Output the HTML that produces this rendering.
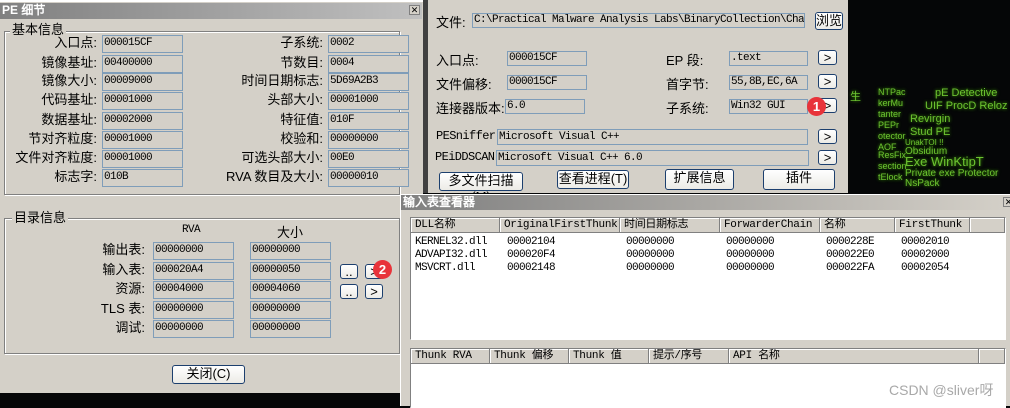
<!DOCTYPE html>
<html><head><meta charset="utf-8"><style>
*{margin:0;padding:0;box-sizing:border-box}
body{width:1010px;height:406px;overflow:hidden;background:#050607;position:relative;font-family:"Liberation Sans","Noto Sans CJK SC",sans-serif;font-size:12px;color:#000}
.a{position:absolute}
.win{background:#d4d0c8}
.tb{background:linear-gradient(90deg,#808080,#c0c0c0);color:#fff;font-weight:bold;font-size:12px;line-height:15px;padding-left:2px;font-family:"Liberation Sans","WenQuanYi Zen Hei",sans-serif}
.x{width:11px;height:10px;border:1px solid #808080;background:#d4d0c8;font-size:9px;line-height:8px;text-align:center;color:#000;font-weight:normal}
.f{border:1px solid #7f9db9;background:#d4d0c8;font-family:"Liberation Mono",monospace;font-size:11px;line-height:15px;padding-left:1px;overflow:hidden;white-space:nowrap;letter-spacing:-0.6px}
.l{text-align:right;font-size:13px;line-height:16px;white-space:nowrap}
.g{border:1px solid #808080;box-shadow:1px 1px 0 #fff inset,1px 1px 0 #fff}
.gt{background:#d4d0c8;font-size:13px;line-height:14px;padding:0 2px}
.b{border:1px solid #1c3f6e;border-radius:3px;background:linear-gradient(#fff,#ecebe6);text-align:center;font-size:13px;line-height:16px}
.lv{background:#fff;border:1px solid #808080;border-right-color:#fff;border-bottom-color:#fff}
.h{background:#d4d0c8;border-right:1px solid #808080;border-bottom:1px solid #808080;box-shadow:inset 1px 1px 0 #fff;font-family:"Liberation Mono","Noto Sans CJK SC",monospace;font-size:11px;line-height:14px;padding-left:4px;white-space:nowrap;overflow:hidden;letter-spacing:-0.3px}
.m{font-family:"Liberation Mono",monospace;font-size:11px;line-height:13px;letter-spacing:-0.6px;white-space:nowrap}
.gr{color:#6cc232;font-size:10px;white-space:nowrap;text-shadow:0 0 3px #4a0}
.bad{background:#e8333a;color:#fff;border-radius:50%;width:19px;height:19px;text-align:center;font-size:13px;line-height:19px;font-weight:bold}
</style></head><body>

<div class="a win" style="left:0;top:0;width:423px;height:393px;border-top:2px solid #fff"></div>
<div class="a tb" style="left:0;top:3px;width:422px;height:16px">PE 细节</div>
<div class="a x" style="left:409px;top:5px">✕</div>
<div class="a" style="left:423px;top:0;width:5px;height:193px;background:#404040"></div>

<div class="a g" style="left:4px;top:31px;width:396px;height:164px"></div>
<div class="a gt" style="left:10px;top:23px">基本信息</div>
<div class="a l" style="left:0;width:97px;top:35px">入口点:</div><div class="a f" style="left:102px;top:35px;width:81px;height:18px">000015CF</div>
<div class="a l" style="left:0;width:97px;top:55px">镜像基址:</div><div class="a f" style="left:102px;top:55px;width:81px;height:18px">00400000</div>
<div class="a l" style="left:0;width:97px;top:73px">镜像大小:</div><div class="a f" style="left:102px;top:73px;width:81px;height:18px">00009000</div>
<div class="a l" style="left:0;width:97px;top:92px">代码基址:</div><div class="a f" style="left:102px;top:92px;width:81px;height:18px">00001000</div>
<div class="a l" style="left:0;width:97px;top:112px">数据基址:</div><div class="a f" style="left:102px;top:112px;width:81px;height:18px">00002000</div>
<div class="a l" style="left:0;width:97px;top:131px">节对齐粒度:</div><div class="a f" style="left:102px;top:131px;width:81px;height:18px">00001000</div>
<div class="a l" style="left:0;width:97px;top:150px">文件对齐粒度:</div><div class="a f" style="left:102px;top:150px;width:81px;height:18px">00001000</div>
<div class="a l" style="left:0;width:97px;top:169px">标志字:</div><div class="a f" style="left:102px;top:169px;width:81px;height:18px">010B</div>

<div class="a l" style="left:200px;width:123px;top:35px">子系统:</div><div class="a f" style="left:328px;top:35px;width:81px;height:18px">0002</div>
<div class="a l" style="left:200px;width:123px;top:55px">节数目:</div><div class="a f" style="left:328px;top:55px;width:81px;height:18px">0004</div>
<div class="a l" style="left:200px;width:123px;top:73px">时间日期标志:</div><div class="a f" style="left:328px;top:73px;width:81px;height:18px">5D69A2B3</div>
<div class="a l" style="left:200px;width:123px;top:92px">头部大小:</div><div class="a f" style="left:328px;top:92px;width:81px;height:18px">00001000</div>
<div class="a l" style="left:200px;width:123px;top:112px">特征值:</div><div class="a f" style="left:328px;top:112px;width:81px;height:18px">010F</div>
<div class="a l" style="left:200px;width:123px;top:131px">校验和:</div><div class="a f" style="left:328px;top:131px;width:81px;height:18px">00000000</div>
<div class="a l" style="left:200px;width:123px;top:150px">可选头部大小:</div><div class="a f" style="left:328px;top:150px;width:81px;height:18px">00E0</div>
<div class="a l" style="left:200px;width:123px;top:169px">RVA 数目及大小:</div><div class="a f" style="left:328px;top:169px;width:81px;height:18px">00000010</div>

<div class="a g" style="left:4px;top:218px;width:396px;height:136px"></div>
<div class="a gt" style="left:12px;top:211px">目录信息</div>
<div class="a m" style="left:182px;top:224px">RVA</div>
<div class="a" style="left:277px;top:222px;font-size:13px">大小</div>
<div class="a l" style="left:60px;width:85px;top:242px">输出表:</div><div class="a f" style="left:153px;top:242px;width:81px;height:18px">00000000</div><div class="a f" style="left:250px;top:242px;width:81px;height:18px">00000000</div>
<div class="a l" style="left:60px;width:85px;top:262px">输入表:</div><div class="a f" style="left:153px;top:262px;width:81px;height:18px">000020A4</div><div class="a f" style="left:250px;top:262px;width:81px;height:18px">00000050</div>
<div class="a l" style="left:60px;width:85px;top:281px">资源:</div><div class="a f" style="left:153px;top:281px;width:81px;height:18px">00004000</div><div class="a f" style="left:250px;top:281px;width:81px;height:18px">00004060</div>
<div class="a l" style="left:60px;width:85px;top:301px">TLS 表:</div><div class="a f" style="left:153px;top:301px;width:81px;height:18px">00000000</div><div class="a f" style="left:250px;top:301px;width:81px;height:18px">00000000</div>
<div class="a l" style="left:60px;width:85px;top:320px">调试:</div><div class="a f" style="left:153px;top:320px;width:81px;height:18px">00000000</div><div class="a f" style="left:250px;top:320px;width:81px;height:18px">00000000</div>
<div class="a b" style="left:340px;top:264px;width:18px;height:15px;line-height:13px">..</div>
<div class="a b" style="left:365px;top:264px;width:18px;height:15px;line-height:13px">&gt;</div>
<div class="a b" style="left:340px;top:284px;width:18px;height:15px;line-height:13px">..</div>
<div class="a b" style="left:365px;top:284px;width:18px;height:15px;line-height:13px">&gt;</div>
<div class="a bad" style="left:373px;top:260px">2</div>
<div class="a b" style="left:172px;top:365px;width:73px;height:19px">关闭(C)</div>

<div class="a win" style="left:428px;top:0;width:420px;height:193px"></div>
<div class="a" style="left:436px;top:12px;font-size:13px">文件:</div>
<div class="a f" style="left:472px;top:13px;width:333px;height:15px;line-height:13px">C:\Practical Malware Analysis Labs\BinaryCollection\Cha</div>
<div class="a b" style="left:815px;top:12px;width:28px;height:18px">浏览</div>

<div class="a" style="left:436px;top:50px;font-size:13px">入口点:</div><div class="a f" style="left:507px;top:51px;width:80px;height:15px;line-height:13px">000015CF</div>
<div class="a" style="left:436px;top:74px;font-size:13px">文件偏移:</div><div class="a f" style="left:507px;top:75px;width:80px;height:15px;line-height:13px">000015CF</div>
<div class="a" style="left:436px;top:98px;font-size:13px">连接器版本:</div><div class="a f" style="left:505px;top:99px;width:80px;height:15px;line-height:13px">6.0</div>
<div class="a" style="left:666px;top:50px;font-size:13px">EP 段:</div><div class="a f" style="left:729px;top:51px;width:79px;height:15px;line-height:13px">.text</div>
<div class="a" style="left:666px;top:74px;font-size:13px">首字节:</div><div class="a f" style="left:729px;top:75px;width:79px;height:15px;line-height:13px">55,8B,EC,6A</div>
<div class="a" style="left:666px;top:98px;font-size:13px">子系统:</div><div class="a f" style="left:729px;top:99px;width:79px;height:15px;line-height:13px">Win32 GUI</div>
<div class="a b" style="left:818px;top:50px;width:19px;height:15px;line-height:13px">&gt;</div>
<div class="a b" style="left:818px;top:74px;width:19px;height:15px;line-height:13px">&gt;</div>
<div class="a b" style="left:818px;top:98px;width:19px;height:15px;line-height:13px">&gt;</div>
<div class="a bad" style="left:807px;top:97px">1</div>
<div class="a m" style="left:436px;top:130px;font-size:12px">PESniffer:</div><div class="a f" style="left:497px;top:129px;width:311px;height:16px;line-height:14px">Microsoft Visual C++</div>
<div class="a m" style="left:435px;top:151px;font-size:12px">PEiDDSCAN:</div><div class="a f" style="left:496px;top:150px;width:313px;height:16px;line-height:14px">Microsoft Visual C++ 6.0</div>
<div class="a b" style="left:818px;top:129px;width:19px;height:15px;line-height:13px">&gt;</div>
<div class="a b" style="left:818px;top:150px;width:19px;height:15px;line-height:13px">&gt;</div>
<div class="a b" style="left:439px;top:172px;width:84px;height:19px">多文件扫描(M)</div>
<div class="a b" style="left:557px;top:170px;width:72px;height:19px">查看进程(T)</div>
<div class="a b" style="left:665px;top:169px;width:69px;height:21px">扩展信息</div>
<div class="a b" style="left:763px;top:169px;width:72px;height:21px">插件</div>

<div class="a gr" style="left:850px;top:88px;font-size:11px">生</div>
<div class="a gr" style="left:878px;top:87px;line-height:11px;font-size:9px">NTPac<br>kerMu<br>tanter<br>PEPr<br>otector<br>AOF</div>
<div class="a gr" style="left:935px;top:87px;font-size:11px">pE Detective</div>
<div class="a gr" style="left:925px;top:100px;font-size:11px">UIF ProcD Reloz</div>
<div class="a gr" style="left:910px;top:113px;font-size:11px">Revirgin</div>
<div class="a gr" style="left:910px;top:126px;font-size:11px">Stud PE</div>
<div class="a gr" style="left:905px;top:138px;font-size:8px">UnakTOI !!</div>
<div class="a gr" style="left:905px;top:146px;font-size:10px">Obsidium</div>
<div class="a gr" style="left:905px;top:154px;font-size:13px">Exe WinKtipT</div>
<div class="a gr" style="left:905px;top:168px;font-size:10px">Private exe Protector</div>
<div class="a gr" style="left:905px;top:178px;font-size:10px">NsPack</div>
<div class="a gr" style="left:878px;top:150px;line-height:11px;font-size:9px">ResFix<br>section<br>tElock</div>

<div class="a win" style="left:400px;top:194px;width:610px;height:212px;border-left:1px solid #fff;border-top:1px solid #fff"></div>
<div class="a tb" style="left:401px;top:195px;width:609px;height:15px;background:linear-gradient(90deg,#808080,#d4d0c8)">输入表查看器</div>
<div class="a x" style="left:1003px;top:197px">✕</div>
<div class="a lv" style="left:410px;top:217px;width:596px;height:123px"></div>
<div class="a h" style="left:411px;top:218px;width:89px;height:15px">DLL名称</div>
<div class="a h" style="left:500px;top:218px;width:120px;height:15px">OriginalFirstThunk</div>
<div class="a h" style="left:620px;top:218px;width:100px;height:15px">时间日期标志</div>
<div class="a h" style="left:720px;top:218px;width:100px;height:15px">ForwarderChain</div>
<div class="a h" style="left:820px;top:218px;width:75px;height:15px">名称</div>
<div class="a h" style="left:895px;top:218px;width:75px;height:15px">FirstThunk</div>
<div class="a h" style="left:970px;top:218px;width:35px;height:15px"></div>
<div class="a m" style="left:415px;top:236px;line-height:13px">KERNEL32.dll<br>ADVAPI32.dll<br>MSVCRT.dll</div>
<div class="a m" style="left:507px;top:236px;line-height:13px">00002104<br>000020F4<br>00002148</div>
<div class="a m" style="left:626px;top:236px;line-height:13px">00000000<br>00000000<br>00000000</div>
<div class="a m" style="left:726px;top:236px;line-height:13px">00000000<br>00000000<br>00000000</div>
<div class="a m" style="left:826px;top:236px;line-height:13px">0000228E<br>000022E0<br>000022FA</div>
<div class="a m" style="left:901px;top:236px;line-height:13px">00002010<br>00002000<br>00002054</div>

<div class="a lv" style="left:410px;top:348px;width:596px;height:60px"></div>
<div class="a h" style="left:411px;top:349px;width:79px;height:15px">Thunk RVA</div>
<div class="a h" style="left:490px;top:349px;width:79px;height:15px">Thunk 偏移</div>
<div class="a h" style="left:569px;top:349px;width:80px;height:15px">Thunk 值</div>
<div class="a h" style="left:649px;top:349px;width:80px;height:15px">提示/序号</div>
<div class="a h" style="left:729px;top:349px;width:250px;height:15px">API 名称</div>
<div class="a h" style="left:979px;top:349px;width:26px;height:15px"></div>
<div class="a" style="left:889px;top:380px;color:#a8a8a8;font-size:14px;white-space:nowrap">CSDN @sliver呀</div>
</body></html>
